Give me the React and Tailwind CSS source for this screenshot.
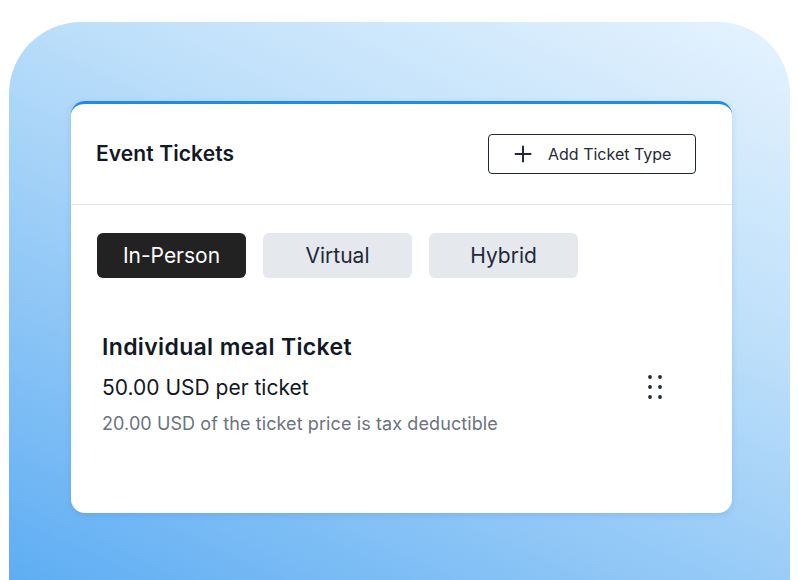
export default function App() {
  return (
    <div className="w-[798px] h-[580px] bg-white overflow-hidden" style={{ fontFamily: "Inter, 'Noto Sans', sans-serif" }}>
      <div className="ml-[9px] mt-[22px] w-[781px] h-[558px] rounded-t-[72px] bg-[linear-gradient(205deg,#e6f3fe_0%,#bfe0fa_35%,#8cc5f6_70%,#5eadf3_100%)] pt-[79px] pl-[62px]">
        <div className="w-[661px] h-[412px] bg-white rounded-[14px] border-t-[3px] border-[#2189ea] shadow-[0_2px_6px_rgba(30,100,180,0.15)]">
          <div className="flex items-center justify-between h-[101px] pl-[25px] pr-[36px] border-b border-[#e2e5e9]">
            <h1 className="text-[21px] font-semibold text-[#111827] tracking-[0.1px]">Event Tickets</h1>
            <button className="flex items-center w-[208px] h-[40px] border-[1.5px] border-[#1f2937] rounded-[4px] pl-[25px] gap-[16px] text-[16px] text-[#1f2937]">
              <svg width="18" height="18" viewBox="0 0 18 18" fill="none" stroke="#1f2937" strokeWidth="2" strokeLinecap="round">
                <path d="M9 1.5v15M1.5 9h15" />
              </svg>
              <span>Add Ticket Type</span>
            </button>
          </div>
          <div className="flex gap-[17px] pl-[26px] pt-[28px]">
            <div className="w-[149px] h-[45px] rounded-[6px] bg-[#222222] text-white text-[21px] flex items-center justify-center">In-Person</div>
            <div className="w-[149px] h-[45px] rounded-[6px] bg-[#e5e8ec] text-[#1f2937] text-[21px] flex items-center justify-center">Virtual</div>
            <div className="w-[149px] h-[45px] rounded-[6px] bg-[#e5e8ec] text-[#1f2937] text-[21px] flex items-center justify-center">Hybrid</div>
          </div>
          <div className="flex items-center justify-between pl-[31px] pr-[70px] pt-[54px]">
            <div className="flex flex-col">
              <div className="text-[23px] font-semibold text-[#111827] leading-[30px] tracking-[0.35px]">Individual meal Ticket</div>
              <div className="text-[21px] text-[#111827] leading-[28px] mt-[12px]">50.00 USD per ticket</div>
              <div className="text-[18px] text-[#6b7280] leading-[24px] mt-[10px] tracking-[0.1px]">20.00 USD of the ticket price is tax deductible</div>
            </div>
            <svg width="14" height="24" viewBox="0 0 14 24" fill="#1f2937" className="mt-[5px]">
              <circle cx="2" cy="2" r="1.9" />
              <circle cx="12" cy="2" r="1.9" />
              <circle cx="2" cy="12" r="1.9" />
              <circle cx="12" cy="12" r="1.9" />
              <circle cx="2" cy="22" r="1.9" />
              <circle cx="12" cy="22" r="1.9" />
            </svg>
          </div>
        </div>
      </div>
    </div>
  );
}
